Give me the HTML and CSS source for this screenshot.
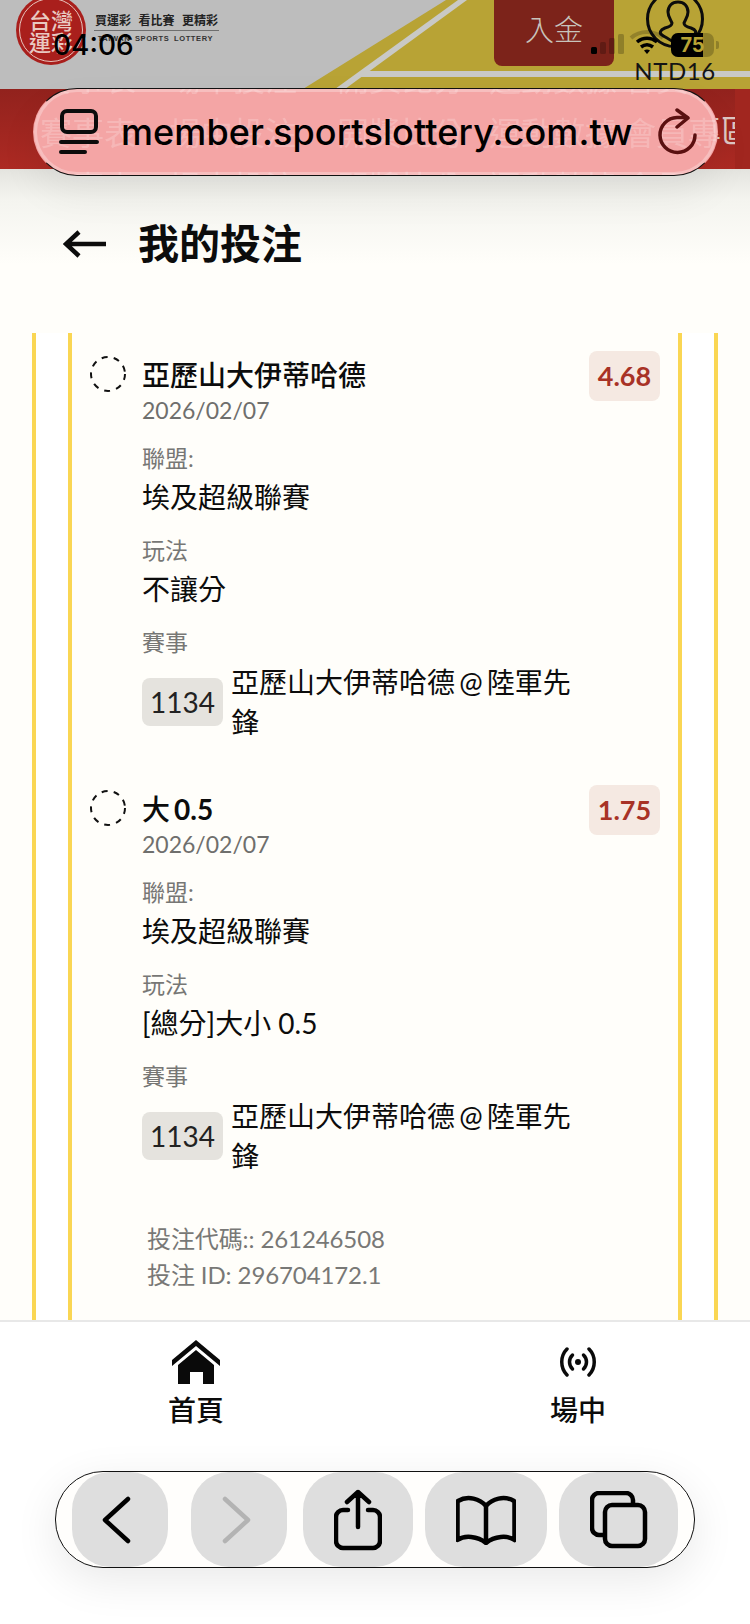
FILE: index.html
```html
<!DOCTYPE html>
<html lang="zh-Hant">
<head>
<meta charset="utf-8">
<title>我的投注</title>
<link rel="stylesheet" href="styles.css">
</head>
<body>
<div class="page">
  <header class="site-header">
    <svg class="header-art" viewBox="0 0 750 89" width="750" height="89">
      <polygon class="art-yellow" points="303,89 446,0 750,0 750,89"/>
      <polygon class="art-line" points="335,89 458,0 467,0 345,89"/>
      <polygon class="art-line" points="358,77 367,71 750,71 750,77"/>
    </svg>
    <div class="logo"><div class="logo-ring"><span>台灣</span><span>運彩</span></div></div>
    <div class="brand">
      <div class="brand-top"><span>買運彩</span><span>看比賽</span><span>更精彩</span></div>
      <div class="brand-en">TAIWAN SPORTS LOTTERY</div>
    </div>
    <div class="deposit">入金</div>
    <div class="account">
      <svg class="account-icon" width="60" height="50" viewBox="0 0 60 50">
        <circle cx="30" cy="19" r="27.5"/>
        <path d="M33 2C27 2 23 6 23 12c0 5 3 8 4 11 0 3-3 4-7 5-5 2-6 5-3 7 4 3 9 4 13 9"/>
        <path d="M33 2c6 0 10 4 10 10 0 5-3 8-4 11 0 3 3 4 7 5 5 2 6 4 3 7"/>
      </svg>
      <div class="account-name">NTD16</div>
    </div>
  </header>

  <nav class="nav nav-row">
    <span>賽事表</span><span>場中投注</span><span>開獎比分</span><span>運動數據</span><span>會員專區</span>
  </nav>

  <div class="title-bar">
    <svg class="back-arrow" width="44" height="30" viewBox="0 0 44 30"><path d="M43 15H4M16 3 3 15l13 12"/></svg>
    <h1 class="title">我的投注</h1>
  </div>

  <main class="track">
    <div class="panel">
      <section class="bet">
        <svg class="spinner" width="36" height="36" viewBox="0 0 36 36"><circle cx="18" cy="18" r="17"/></svg>
        <div class="bet-body">
          <div class="bet-name">亞歷山大伊蒂哈德</div>
          <div class="bet-date">2026/02/07</div>
          <div class="label">聯盟:</div>
          <div class="value">埃及超級聯賽</div>
          <div class="label">玩法</div>
          <div class="value">不讓分</div>
          <div class="label label-event">賽事</div>
          <div class="event">
            <span class="chip">1134</span>
            <span class="event-name">亞歷山大伊蒂哈德 @ 陸軍先鋒</span>
          </div>
        </div>
        <div class="odds">4.68</div>
      </section>
      <section class="bet">
        <svg class="spinner" width="36" height="36" viewBox="0 0 36 36"><circle cx="18" cy="18" r="17"/></svg>
        <div class="bet-body">
          <div class="bet-name">大 <span class="bet-num">0.5</span></div>
          <div class="bet-date">2026/02/07</div>
          <div class="label">聯盟:</div>
          <div class="value">埃及超級聯賽</div>
          <div class="label">玩法</div>
          <div class="value">[總分]大小 0.5</div>
          <div class="label label-event">賽事</div>
          <div class="event">
            <span class="chip">1134</span>
            <span class="event-name">亞歷山大伊蒂哈德 @ 陸軍先鋒</span>
          </div>
        </div>
        <div class="odds">1.75</div>
      </section>
      <div class="meta">
        <div>投注代碼:: 261246508</div>
        <div>投注 ID: 296704172.1</div>
      </div>
    </div>
  </main>

  <footer class="tabbar">
    <div class="tabs">
      <div class="tab">
        <div class="tab-icon">
          <svg width="48" height="44" viewBox="0 0 48 44"><path class="fill" d="M24 0 48 20v6L24 6 0 26v-6z"/><path class="fill" d="M24 10 42 25v19H31V32H18v12H6V25z"/></svg>
        </div>
        <div class="tab-label">首頁</div>
      </div>
      <div class="tab">
        <div class="tab-icon">
          <svg width="38" height="30" viewBox="0 0 38 30"><g class="stroke-thin"><path d="M8 2C1 9 1 21 8 28M30 2c7 7 7 19 0 26"/><path d="M13.500 8c-4 4-4 10 0 14M24.500 8c4 4 4 10 0 14"/></g><circle class="fill" cx="19" cy="15" r="3"/></svg>
        </div>
        <div class="tab-label">場中</div>
      </div>
    </div>
  </footer>

  <!-- Browser chrome floating over the page -->
  <div class="status">
    <span class="clock">04:06</span>
    <div class="status-icons">
      <div class="signal"><i class="s1"></i><i class="s2"></i><i class="s3"></i><i class="s4"></i></div>
      <svg class="wifi" width="36" height="24" viewBox="0 0 36 24">
        <path class="wifi-faint" d="M2 8C11 0 25 0 34 8"/>
        <path class="wifi-on" d="M8 12c6-5 14-5 20 0M12 17c4-3 8-3 12 0"/>
        <path class="wifi-dot" d="M15 20.500c2-1.500 4-1.500 6 0l-3 3.500z"/>
      </svg>
      <div class="battery"><span class="battery-fill"></span><span class="battery-text">75</span></div>
      <i class="battery-nub"></i>
    </div>
  </div>

  <div class="urlbar">
    <div class="ghost">
      <div class="nav-row ghost-row"><span>賽事表</span><span>場中投注</span><span>開獎比分</span><span>運動數據</span><span>會員專區</span></div>
      <div class="nav-row ghost-row"><span>賽事表</span><span>場中投注</span><span>開獎比分</span><span>運動數據</span><span>會員專區</span></div>
      <div class="nav-row ghost-row"><span>賽事表</span><span>場中投注</span><span>開獎比分</span><span>運動數據</span><span>會員專區</span></div>
    </div>
    <svg class="url-icon" width="40" height="46" viewBox="0 0 40 46"><rect x="3" y="2" width="34" height="21" rx="5"/><path d="M2 33h36M2 43h24"/></svg>
    <span class="url-text">member.sportslottery.com.tw</span>
    <svg class="reload" width="42" height="48" viewBox="0 0 42 48"><path d="M38 27a17.500 17.500 0 1 1-18-17.500h10"/><path d="M20 2l11 8-11 9"/></svg>
  </div>

  <div class="toolbar">
    <div class="tool tool-back"><svg width="30" height="48" viewBox="0 0 30 48"><path d="M27 3 4 24l23 21"/></svg></div>
    <div class="tool tool-forward"><svg width="30" height="48" viewBox="0 0 30 48"><path d="M3 3l23 21L3 45"/></svg></div>
    <div class="tool tool-share"><svg width="48" height="62" viewBox="0 0 48 62"><path d="M24 38V3M13 13 24 3l11 10M14 21H9a7 7 0 0 0-7 7v24a7 7 0 0 0 7 7h30a7 7 0 0 0 7-7V28a7 7 0 0 0-7-7h-5"/></svg></div>
    <div class="tool tool-book"><svg width="60" height="50" viewBox="0 0 60 50"><path d="M30 11C24 4 12 0 2 6c-.3 0-.5 1-.5 2v37c7-5 20-4 28.500 3 8.500-7 21.500-8 28.500-3V8c0-1-.2-2-.5-2C48 0 36 4 30 11v37"/></svg></div>
    <div class="tool tool-tabs"><svg width="58" height="58" viewBox="0 0 58 58"><path d="M13 44H9a7 7 0 0 1-7-7V9a7 7 0 0 1 7-7h27a7 7 0 0 1 7 7v4"/><rect x="15" y="14" width="40" height="41" rx="7"/></svg></div>
  </div>
</div>
</body>
</html>
```
FILE: styles.css
```css
* { box-sizing: border-box; }
html, body { margin: 0; padding: 0; }
body {
  background: #fffefa;
  font-family: "Lato", "Noto Sans CJK TC", sans-serif;
  color: #0c0c0c;
}
.page {
  position: relative;
  width: 750px;
  height: 1624px;
  overflow: hidden;
  display: flex;
  flex-direction: column;
  background: #fffefa;
}

/* site header */
.site-header {
  position: relative;
  flex: 0 0 89px;
  display: flex;
  align-items: flex-start;
  background: #bdbdbd;
  overflow: hidden;
}
.header-art { position: absolute; left: 0; top: 0; }
.art-yellow { fill: #b8a335; }
.art-line { fill: #c9c9c6; }
.logo {
  position: relative;
  flex: 0 0 70px;
  height: 70px;
  margin: -5px 0 0 16px;
  border-radius: 50%;
  background: #a91f1c;
  padding: 3px;
}
.logo-ring {
  width: 100%;
  height: 100%;
  border: 1px solid #e6c4bd;
  border-radius: 50%;
  display: flex;
  flex-direction: column;
  align-items: center;
  justify-content: center;
  color: #e9c9c2;
  font-size: 22px;
  font-weight: 500;
  line-height: 22px;
  padding-top: 3px;
}
.brand {
  position: relative;
  margin: 13px 0 0 8px;
  width: 125px;
  color: #222;
}
.brand-top {
  display: flex;
  justify-content: space-between;
  padding: 0 1px;
  font-size: 12px;
  font-weight: 700;
  line-height: 16px;
  border-bottom: 1px solid #6e6e6e;
  height: 18px;
}
.brand-en {
  margin-top: 2px;
  font-family: "Liberation Sans", sans-serif;
  font-size: 7.500px;
  font-weight: 700;
  letter-spacing: .6px;
  word-spacing: 2px;
  line-height: 12px;
  text-align: right;
  padding-right: 6px;
  white-space: nowrap;
  color: #333;
}
.deposit {
  position: relative;
  width: 120px;
  height: 66px;
  margin-left: 275px;
  background: #7c231a;
  border-radius: 0 0 8px 8px;
  color: #c8c4bc;
  font-size: 29px;
  font-weight: 300;
  line-height: 60px;
  text-align: center;
}
.account {
  position: relative;
  width: 76px;
  margin-left: 23px;
  display: flex;
  flex-direction: column;
  align-items: center;
}
.account-icon { fill: none; stroke: #0c0c0c; stroke-width: 3; overflow: visible; }
.account-name {
  margin-top: 9px;
  font-size: 24px;
  line-height: 24px;
  letter-spacing: .6px;
  color: #141414;
}

/* red nav */
.nav {
  flex: 0 0 80px;
  width: 735px;
  padding-left: 41px;
  align-items: center;
  background: linear-gradient(#92221d, #ad2a23);
  color: #ddc6c2;
  overflow: hidden;
  box-shadow: 15px 0 0 #a1261f;
}
.nav-row {
  display: grid;
  grid-template-columns: 129px 168px 152px 135px 128px;
  font-size: 32px;
  white-space: nowrap;
}

/* title */
.title-bar {
  flex: 0 0 164px;
  display: flex;
  align-items: flex-start;
  padding: 50px 0 0 63px;
  background: linear-gradient(#e4e4df, #f4f4ef 30px, #fffefa 95px);
}
.back-arrow { fill: none; stroke: #0c0c0c; stroke-width: 4.500; margin-top: 10px; }
.title {
  margin: 0 0 0 31px;
  font-size: 41px;
  font-weight: 700;
  line-height: 50px;
}

/* list */
.track {
  flex: 1;
  min-height: 0;
  margin: 0 32px;
  padding: 0 32px;
  background: #fff;
  border: solid #fad653;
  border-width: 0 4px;
  overflow: hidden;
  display: flex;
}
.panel {
  flex: 1;
  background: #fffefa;
  border: solid #fad653;
  border-width: 0 4px;
  padding: 0 18px;
}
.bet {
  display: flex;
  align-items: flex-start;
  padding: 22px 0 25px;
}
.spinner {
  flex: none;
  fill: none;
  stroke: #111;
  stroke-width: 2;
  stroke-dasharray: 6 6.200;
  margin-top: 1px;
}
.bet-body { flex: 1; min-width: 0; margin-left: 16px; }
.bet-name { font-size: 28px; font-weight: 500; line-height: 40px; }
.bet-num { font-weight: 700; margin-left: -3px; }
.bet-date { font-size: 23px; line-height: 30px; color: #6f6f6d; }
.label {
  margin-top: 17px;
  font-size: 23px;
  line-height: 32px;
  color: #777775;
}
.value {
  margin-top: 3px;
  font-size: 28px;
  line-height: 40px;
}
.label-event { margin-top: 17px; }
.event {
  display: flex;
  align-items: center;
  margin-top: 4px;
}
.chip {
  flex: none;
  width: 81px;
  height: 48px;
  margin-left: 0;
  border-radius: 8px;
  background: #e5e3de;
  font-size: 28px;
  line-height: 48px;
  text-align: center;
  color: #222;
}
.event-name {
  width: 344px;
  margin-left: 8px;
  font-size: 28px;
  line-height: 40px;
  word-spacing: -3px;
}
.odds {
  flex: none;
  width: 71px;
  height: 50px;
  margin-top: -4px;
  border-radius: 8px;
  background: #f5e9e2;
  color: #a83226;
  font-size: 27px;
  font-weight: 700;
  line-height: 50px;
  text-align: center;
}
.meta {
  margin: 20px 0 0 57px;
  font-size: 24px;
  line-height: 36px;
  letter-spacing: -.1px;
  color: #787876;
}

/* bottom tabs */
.tabbar {
  flex: 0 0 304px;
  background: #fff;
  border-top: 2px solid #e8e8e8;
}
.tabs {
  display: flex;
  gap: 82px;
  padding: 13px 0 0 46px;
}
.tab {
  width: 300px;
  display: flex;
  flex-direction: column;
  align-items: center;
}
.tab-icon {
  height: 54px;
  margin-bottom: 3px;
  display: flex;
  align-items: center;
  justify-content: center;
}
.fill { fill: #0a0a0a; }
.stroke-thin { fill: none; stroke: #0a0a0a; stroke-width: 3.500; stroke-linecap: round; }
.tab-label {
  font-size: 28px;
  font-weight: 500;
  line-height: 36px;
}

/* status bar overlay */
.status {
  position: absolute;
  left: 53px;
  right: 31px;
  top: 0;
  height: 60px;
  display: flex;
  justify-content: space-between;
}
.clock {
  font-family: "Inter", sans-serif;
  font-size: 28px;
  font-weight: 500;
  line-height: 34px;
  margin-top: 28px;
  color: #000;
}
.status-icons {
  display: flex;
  align-items: flex-end;
  height: 57px;
}
.signal {
  display: flex;
  align-items: flex-end;
  gap: 3px;
  margin-bottom: 3px;
}
.signal i { display: block; width: 6px; border-radius: 1.500px; background: rgba(0,0,0,.22); }
.signal .s1 { height: 7px; background: #000; }
.signal .s2 { height: 12px; }
.signal .s3 { height: 16px; }
.signal .s4 { height: 20px; }
.wifi { margin: 0 0 3px 5px; fill: none; }
.wifi-faint { stroke: rgba(0,0,0,.2); stroke-width: 4; }
.wifi-on { stroke: #000; stroke-width: 3.500; }
.wifi-dot { fill: #000; }
.battery {
  position: relative;
  width: 43px;
  height: 24px;
  margin-left: 6px;
  border-radius: 7px;
  background: rgba(0,0,0,.22);
  overflow: hidden;
  text-align: center;
}
.battery-fill {
  position: absolute;
  left: 0;
  top: 0;
  bottom: 0;
  width: 32px;
  background: #000;
}
.battery-text {
  position: relative;
  display: block;
  font-family: "Inter", sans-serif;
  font-size: 20px;
  font-weight: 700;
  line-height: 24px;
  color: #b8a335;
}
.battery-nub {
  display: block;
  width: 3px;
  height: 8px;
  margin: 0 0 8px 2px;
  border-radius: 0 2px 2px 0;
  background: rgba(0,0,0,.22);
}

/* URL bar overlay */
.urlbar {
  position: absolute;
  left: 33px;
  top: 88px;
  width: 685px;
  height: 88px;
  display: flex;
  align-items: center;
  padding-left: 25px;
  border-radius: 44px;
  border: 1.500px solid #111;
  border-left-color: transparent;
  border-right-color: transparent;
  background: #f4a5a5;
  box-shadow: inset 0 0 0 3px rgba(255,255,255,.28), 0 18px 40px rgba(0,0,0,.06);
  overflow: hidden;
}
.ghost {
  position: absolute;
  left: 6px;
  top: -37px;
  color: #fff;
  opacity: .2;
  filter: blur(.7px);
}
.ghost-row { line-height: 54px; }
.url-icon { position: relative; flex: none; fill: none; stroke: #0c0c0c; stroke-width: 4; stroke-linecap: round; }
.url-text {
  position: relative;
  margin-left: 22px;
  font-family: "Inter", sans-serif;
  font-size: 36px;
  font-weight: 500;
  letter-spacing: .12px;
  line-height: 44px;
  color: #000;
  white-space: nowrap;
}
.reload {
  position: relative;
  flex: none;
  margin-left: 25px;
  fill: none;
  stroke: #5a1010;
  stroke-width: 3.500;
  stroke-linecap: round;
  stroke-linejoin: round;
}

/* toolbar overlay */
.toolbar {
  position: absolute;
  left: 55px;
  top: 1471px;
  width: 640px;
  height: 97px;
  display: flex;
  align-items: stretch;
  padding-left: 16px;
  border: 1.500px solid #111;
  border-radius: 48px;
  background: #fffefc;
  box-shadow: 0 12px 45px rgba(0,0,0,.09);
}
.tool {
  border-radius: 38px;
  background: #dedede;
  display: flex;
  align-items: center;
  justify-content: center;
}
.tool svg { fill: none; stroke: #000; stroke-width: 4.500; stroke-linecap: round; stroke-linejoin: round; }
.tool-back { width: 96px; padding-right: 8px; }
.tool-forward { width: 96px; margin-left: 23px; padding-right: 4px; }
.tool-forward svg { stroke: #b3b3b3; }
.tool-share { width: 110px; margin-left: 16px; }
.tool-book { width: 122px; margin-left: 12px; }
.tool-tabs { width: 119px; margin-left: 12px; }
```
